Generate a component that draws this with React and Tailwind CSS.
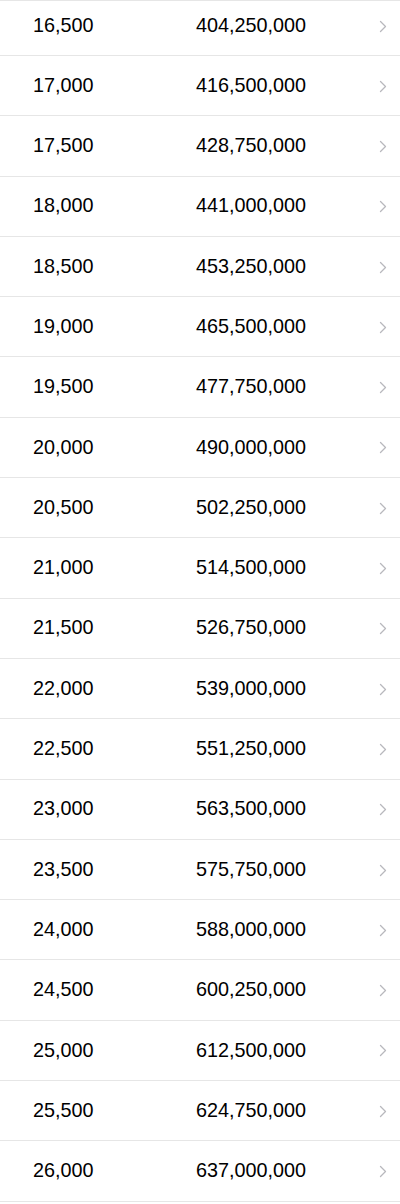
import React from "react";

const rows = [];
for (let i = 0; i < 20; i++) {
  const qty = 16500 + i * 500;
  rows.push({ qty, total: qty * 24500 });
}

const fmt = (n) => n.toLocaleString("en-US");

const Chevron = () => (
  <svg width="8" height="13" viewBox="0 0 8 13" fill="none" className="shrink-0">
    <path d="M1.5 1.5L6.5 6.5L1.5 11.5" stroke="#b8b8bd" strokeWidth="1.3" strokeLinecap="round" strokeLinejoin="round" />
  </svg>
);

const Row = ({ item, first }) => (
  <div
    className={`flex items-center border-b border-[#e6e6e6] text-black text-[19.8px] ${
      first ? "h-[55px] pb-[4px]" : "h-[60.3px]"
    }`}
  >
    <span className="w-[196px] pl-[33px]">{fmt(item.qty)}</span>
    <span className="flex-1">{fmt(item.total)}</span>
    <span className="pr-[13px] pt-[1px]">
      <Chevron />
    </span>
  </div>
);

export default function App() {
  return (
    <div
      className="w-[400px] bg-white border-t-[1.5px] border-[#e6e6e6]"
      style={{ fontFamily: '"Liberation Sans", Arial, sans-serif' }}
    >
      {rows.map((item, i) => (
        <Row key={item.qty} item={item} first={i === 0} />
      ))}
    </div>
  );
}
